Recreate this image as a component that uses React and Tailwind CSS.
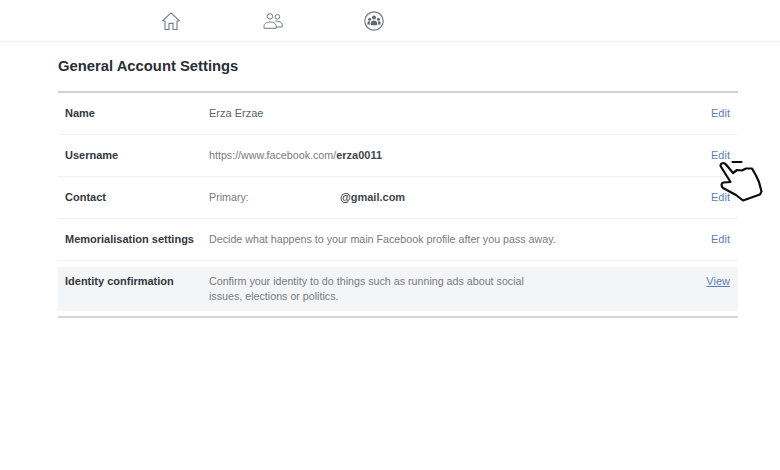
import React from "react";

const rows = [
  { label: "Name", action: "Edit", value: <span className="text-[11px] font-medium text-[#5a5f67]">Erza Erzae</span> },
  {
    label: "Username",
    action: "Edit",
    value: (
      <span>
        https://www.facebook.com/<b className="text-[11px] text-[#41464e]">erza0011</b>
      </span>
    ),
  },
  {
    label: "Contact",
    action: "Edit",
    value: (
      <span className="flex">
        <span className="w-[131px]">Primary:</span>
        <b className="text-[11px] text-[#41464e]">@gmail.com</b>
      </span>
    ),
  },
  {
    label: "Memorialisation settings",
    action: "Edit",
    value: "Decide what happens to your main Facebook profile after you pass away.",
  },
];

const HomeIcon = () => (
  <svg width="20" height="20" viewBox="0 0 20 20" fill="none" stroke="#74787e" strokeWidth="1.1" strokeLinejoin="round">
    <path d="M1.5 9.8 10 1.8 18.5 9.8 16 10V18.5H12V12.4H8V18.5H4V10Z" />
  </svg>
);

const FriendsIcon = () => (
  <svg width="20" height="16" viewBox="0 0 20 16" fill="none" stroke="#74787e" strokeWidth="1">
    <circle cx="7" cy="3.4" r="2.7" />
    <circle cx="14.4" cy="3.8" r="2.3" />
    <path d="M1 15.3V13.2C1 10.6 3.6 9 7.2 9S13.2 10.6 13.2 13.2V15.3Z" />
    <path d="M12.4 8.2C15.6 7.8 19.2 9.2 19.2 11.8V14H13.2" />
  </svg>
);

const GroupsIcon = () => (
  <svg width="20" height="20" viewBox="0 0 20 20">
    <circle cx="10" cy="10" r="9.2" fill="#fff" stroke="#74787e" strokeWidth="1.2" />
    <g fill="#63676c">
      <circle cx="10" cy="6.6" r="2" />
      <circle cx="5.6" cy="8.2" r="1.5" />
      <circle cx="14.4" cy="8.2" r="1.5" />
      <path d="M6.8 14.2V12.2C6.8 10.4 8.2 9.4 10 9.4S13.2 10.4 13.2 12.2V14.2Z" />
      <path d="M3.4 13.4V12C3.4 10.8 4.4 10.2 6.1 10.4 5.7 11.2 5.8 12.4 5.8 13.8Z" />
      <path d="M16.6 13.4V12C16.6 10.8 15.6 10.2 13.9 10.4 14.3 11.2 14.2 12.4 14.2 13.8Z" />
    </g>
  </svg>
);

// drawn over the Edit links, like the screen recorder's pointer
const HandCursor = () => (
  <svg
    className="absolute left-[715px] top-[157px]"
    width="50"
    height="48"
    viewBox="0 0 50 48"
    fill="#fff"
    stroke="#0c0c0c"
    strokeWidth="2.2"
    strokeLinejoin="round"
    strokeLinecap="round"
  >
    <path d="M5.5 9C5.5 6 9 5 11 7.5L18 16 22 13 27 13.5 31 11.5 37 11.5 41 18.5 44 25 46.5 34.5 45 37.5 28 43.5 21 38 8 31C6 29 6 26 8.5 25.5L15.5 25Z" />
    <path d="M17.5 5H26.5" fill="none" />
  </svg>
);

const Row = ({ label, value, action }) => (
  <div className="flex h-[42px] items-start border-b border-[#f0f1f2] pl-[7px] pr-[8px] pt-[13px] leading-[14px]">
    <div className="w-[144px] shrink-0 text-[11px] font-bold text-[#33373e]">{label}</div>
    <div className="flex-1 text-[10.7px] text-[#777b81]">{value}</div>
    <a className="text-[11px] text-[#5b7dba]">{action}</a>
  </div>
);

export default function App() {
  return (
    <div className="relative h-[470px] w-[780px] overflow-hidden bg-white font-['Liberation_Sans',Arial,sans-serif]">
      <div className="flex h-[42px] items-center border-b border-[#f0f0f0] pl-[161px]">
        <div className="flex w-[102px]">
          <HomeIcon />
        </div>
        <div className="flex w-[101px]">
          <FriendsIcon />
        </div>
        <GroupsIcon />
      </div>

      <div className="ml-[58px] w-[680px]">
        <h1 className="mt-[15px] h-[34px] text-[14.8px] font-bold leading-[18px] text-[#2a2e35]">General Account Settings</h1>
        <div className="border-t-2 border-[#d0d1d3]">
          {rows.map((row) => (
            <Row key={row.label} {...row} />
          ))}
          <div className="mt-[6px] flex h-[44px] items-start bg-[#f4f5f7] pl-[7px] pr-[8px] pt-[7px] leading-[15px]">
            <div className="w-[144px] shrink-0 text-[11px] font-bold text-[#33373e]">Identity confirmation</div>
            <div className="flex-1 text-[10.7px] text-[#777b81]">
              Confirm your identity to do things such as running ads about social
              <br />
              issues, elections or politics.
            </div>
            <a className="text-[11px] text-[#5b7dba] underline">View</a>
          </div>
        </div>
        <div className="mt-[5px] border-t-2 border-[#d4d5d7]" />
      </div>

      <HandCursor />
    </div>
  );
}
